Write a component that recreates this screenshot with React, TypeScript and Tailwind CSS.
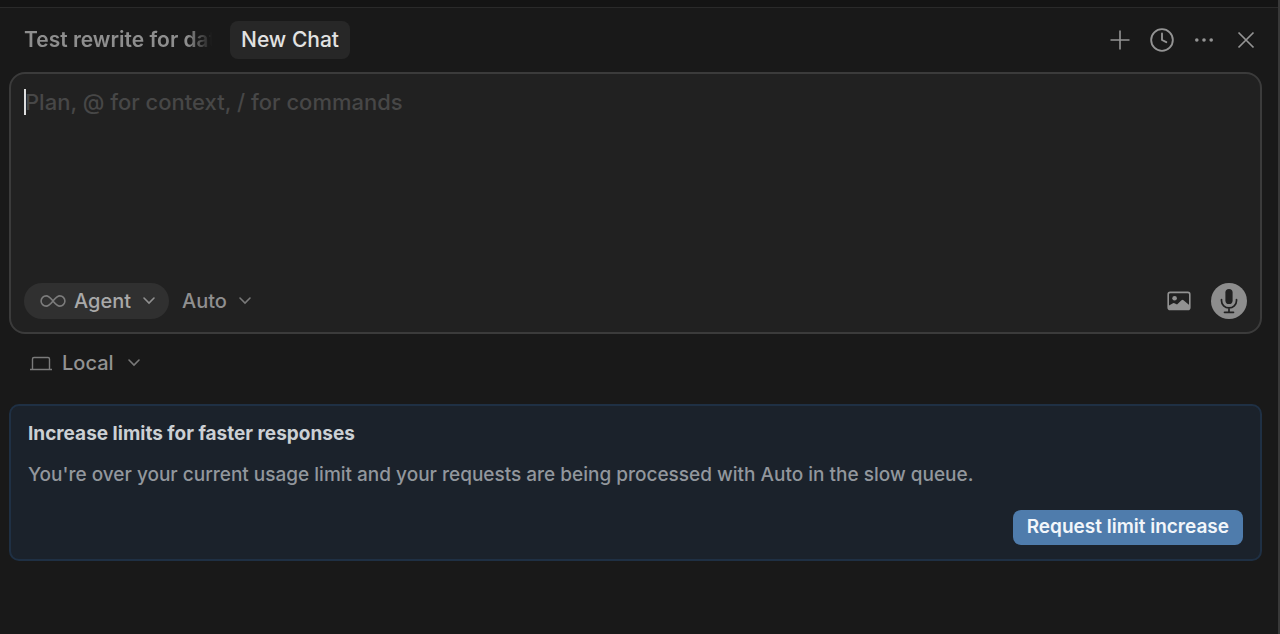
import { useState, type ReactNode } from 'react';
import { Clock } from 'lucide-react';

type PickerProps = {
  label: string;
  options: string[];
  icon?: ReactNode;
  className?: string;
};

function InfinityIcon() {
  return (
    <svg viewBox="0 0 26 14" fill="none" stroke="currentColor" strokeWidth="1.6" className="w-[26px] h-[14px] text-[#7c7c7c]">
      <path d="M13 7C10.500 4 9 1.900 6.200 1.900a5.100 5.100 0 0 0 0 10.200C9 12.100 10.500 10 13 7s4-5.100 6.800-5.100a5.100 5.100 0 0 1 0 10.200C17 12.100 15.500 10 13 7Z" />
    </svg>
  );
}

function LaptopIcon() {
  return (
    <svg viewBox="0 0 22 16" fill="none" stroke="currentColor" strokeWidth="1.4" className="w-[22px] h-4 text-[#7a7a7a]">
      <path d="M2.500 14V4A1.500 1.500 0 0 1 4 2.500h14A1.500 1.500 0 0 1 19.500 4v10M0 14.500h22" />
    </svg>
  );
}

function ImageIcon() {
  return (
    <svg viewBox="0 0 24 20" className="w-6 h-5">
      <rect x="1.200" y="1.400" width="21.600" height="17" rx="2" fill="none" stroke="currentColor" strokeWidth="1.600" />
      <circle cx="7.600" cy="7.200" r="2.300" fill="currentColor" />
      <path d="M2 14.500 6 12.200q1-.5 2 .2l2 1.200 4.500-4.400q1-.9 2 0l6 5V17a1.500 1.500 0 0 1-1.500 1.500H3.500A1.500 1.500 0 0 1 2 17Z" fill="currentColor" />
    </svg>
  );
}

function MicIcon() {
  return (
    <svg viewBox="0 0 20 26" fill="none" stroke="currentColor" strokeWidth="1.700" strokeLinecap="round" className="w-5 h-[26px]">
      <rect x="6.400" y="1" width="7.200" height="15" rx="3.600" fill="currentColor" stroke="none" />
      <path d="M2.500 11.500v1.200a7.500 7.200 0 0 0 15 0v-1.200M10 20v4M5.500 24.300h9" />
    </svg>
  );
}

function Picker({ label, options, icon, className = '' }: PickerProps) {
  return (
    <label className={`flex items-center h-9 text-xl font-medium ${className}`}>
      {icon}
      <select aria-label={label} className="appearance-none field-sizing-content bg-transparent outline-none">
        {options.map(option => (
          <option key={option}>{option}</option>
        ))}
      </select>
      <svg viewBox="0 0 20 20" fill="none" stroke="currentColor" strokeWidth="1.600" strokeLinecap="round" className="w-5 h-5 pointer-events-none opacity-80">
        <path d="m5 7 5 5 5-5" />
      </svg>
    </label>
  );
}

export default function App() {
  const [prompt, setPrompt] = useState('');

  return (
    <div className="min-h-screen flex flex-col bg-[#191919] border-r-2 border-[#383838] font-[Inter,sans-serif]">
      <div className="h-2 bg-[#141414] border-b border-[#2a2a2a]" />

      <header className="flex items-center justify-between h-16 pl-6 pr-[19px]">
        <nav className="flex items-center gap-[14px] text-[21px]">
          <button className="w-48 overflow-hidden whitespace-nowrap text-left font-semibold text-[#8e8e8e] mask-r-from-85% mask-r-to-98%">
            Test rewrite for dat
          </button>
          <button className="h-[38px] px-[11px] rounded-lg bg-[#272727] font-medium text-[#e2e2e2] whitespace-nowrap">
            New Chat
          </button>
        </nav>
        <div className="flex items-center gap-4 text-[#949494]">
          <button aria-label="New chat">
            <svg viewBox="0 0 26 26" fill="none" stroke="currentColor" strokeWidth="1.600" className="w-[26px] h-[26px]">
              <path d="M13 3.500v19M3.500 13h19" />
            </svg>
          </button>
          <button aria-label="History">
            <Clock className="w-[26px] h-[26px]" strokeWidth={1.7} />
          </button>
          <button aria-label="More">
            <svg viewBox="0 0 26 26" fill="currentColor" className="w-[26px] h-[26px]">
              <circle cx="5.800" cy="13" r="1.800" />
              <circle cx="13" cy="13" r="1.800" />
              <circle cx="20.200" cy="13" r="1.800" />
            </svg>
          </button>
          <button aria-label="Close">
            <svg viewBox="0 0 26 26" fill="none" stroke="currentColor" strokeWidth="1.700" className="w-[26px] h-[26px]">
              <path d="m5.500 5.500 15 15M20.500 5.500l-15 15" />
            </svg>
          </button>
        </div>
      </header>

      <main className="pl-[9px] pr-4">
        <section className="flex flex-col bg-[#212121] border-2 border-[#3b3b3b] rounded-2xl p-[13px]">
          <div className="relative">
            <textarea
              aria-label="Message"
              value={prompt}
              onChange={e => setPrompt(e.target.value)}
              placeholder="Plan, @ for context, / for commands"
              className="block w-full h-[196px] px-px resize-none bg-transparent outline-none text-[22px] leading-[30px] font-medium text-[#e2e2e2] placeholder:text-[#474747]"
            />
            <span className="absolute left-0 top-0.5 w-0.5 h-[26px] bg-[#dedede]" />
          </div>
          <div className="flex items-center justify-between">
            <div className="flex items-center gap-[13px] text-[#8f8f8f]">
              <Picker
                label="Mode"
                options={['Agent', 'Ask']}
                icon={<InfinityIcon />}
                className="gap-2 pl-4 pr-[10px] rounded-full bg-[#303030] text-[#a9a9a9]"
              />
              <Picker label="Model" options={['Auto']} className="gap-2" />
            </div>
            <div className="flex items-center gap-5">
              <button aria-label="Attach image" className="text-[#929292]">
                <ImageIcon />
              </button>
              <button aria-label="Voice input" className="flex items-center justify-center w-9 h-9 rounded-full bg-[#8d8d8d] text-[#212121]">
                <MicIcon />
              </button>
            </div>
          </div>
        </section>

        <Picker
          label="Environment"
          options={['Local', 'Cloud']}
          icon={<LaptopIcon />}
          className="gap-[10px] w-fit ml-[21px] mt-[11px] text-[#929292]"
        />

        <section className="flex flex-col mt-[23px] px-[17px] py-[14px] bg-[#1b222b] border-2 border-[#1f3044] rounded-[10px]">
          <h2 className="text-[19px] leading-7 font-bold text-[#ccd0d4]">Increase limits for faster responses</h2>
          <p className="mt-3 text-[19px] leading-[30px] font-medium text-[#92979d]">
            You're over your current usage limit and your requests are being processed with Auto in the slow queue.
          </p>
          <button className="self-end mt-5 h-[35px] px-[14px] rounded-lg bg-[#4f7cac] text-[19px] font-semibold text-[#f2f6fa]">
            Request limit increase
          </button>
        </section>
      </main>
    </div>
  );
}
